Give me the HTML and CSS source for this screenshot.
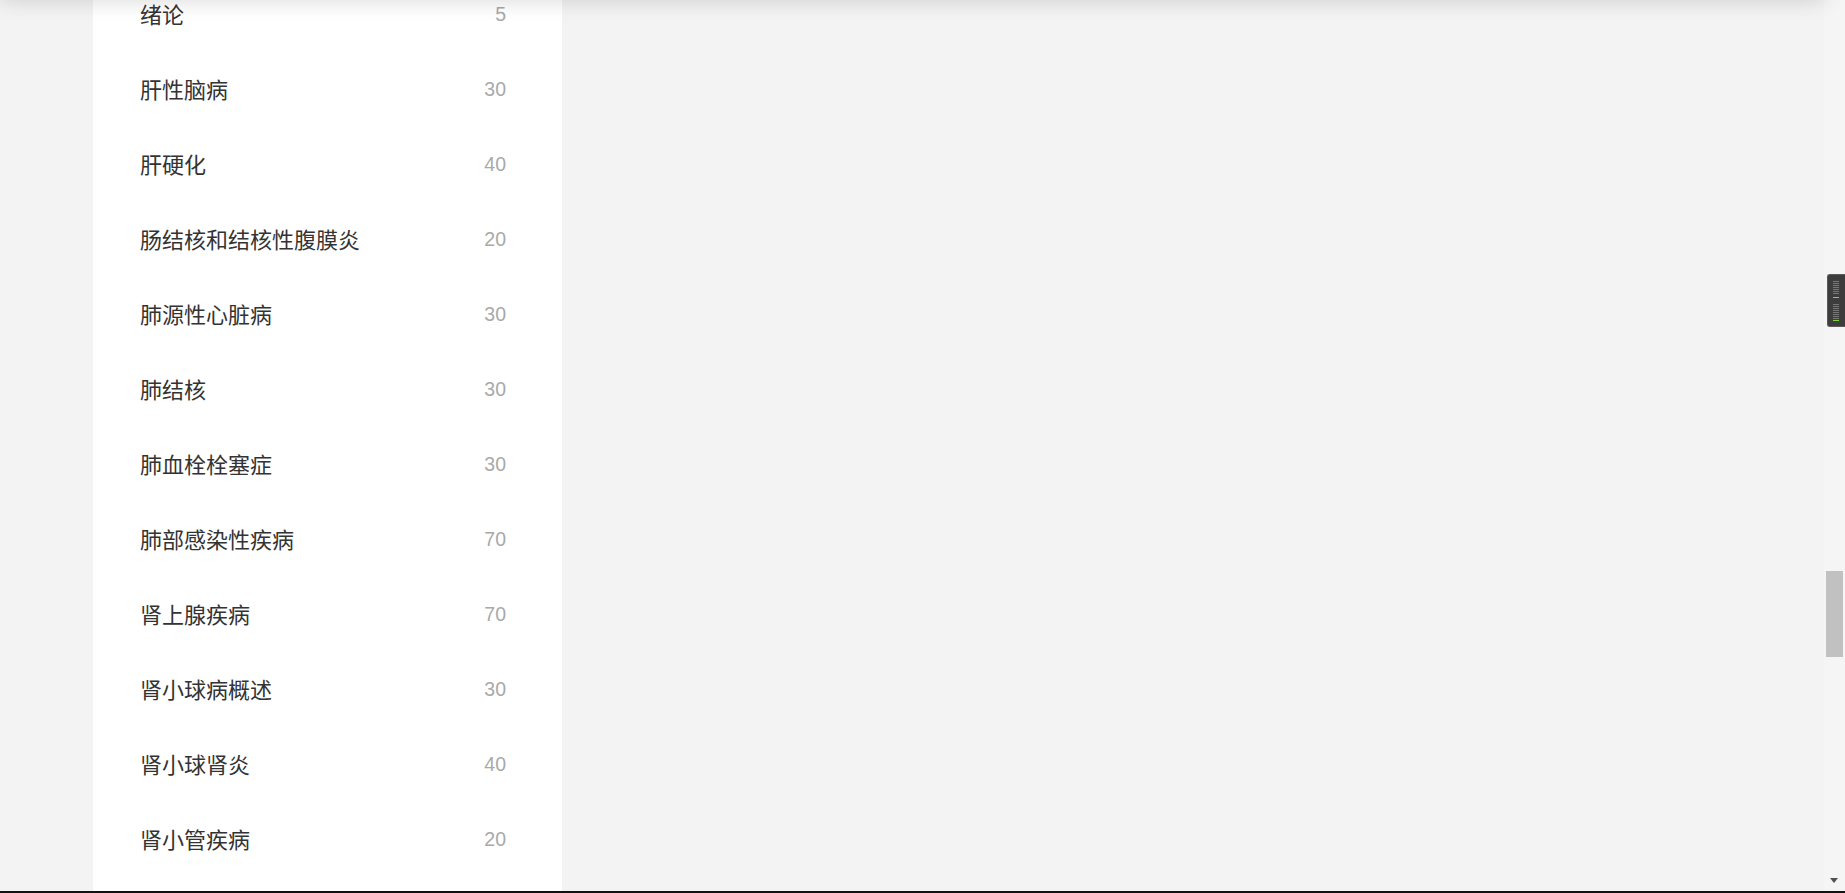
FILE: index.html
```html
<!DOCTYPE html>
<html lang="zh-CN">
<head>
<meta charset="utf-8">
<title>章节列表</title>
<link rel="stylesheet" href="styles.css">
</head>
<body>
<div class="top-shadow"></div>
<div class="viewport">
  <main class="page">
    <section class="panel">
      <ul class="chapter-list">
        <li class="chapter"><span class="name">绪论</span><span class="count">5</span></li>
        <li class="chapter"><span class="name">肝性脑病</span><span class="count">30</span></li>
        <li class="chapter"><span class="name">肝硬化</span><span class="count">40</span></li>
        <li class="chapter"><span class="name">肠结核和结核性腹膜炎</span><span class="count">20</span></li>
        <li class="chapter"><span class="name">肺源性心脏病</span><span class="count">30</span></li>
        <li class="chapter"><span class="name">肺结核</span><span class="count">30</span></li>
        <li class="chapter"><span class="name">肺血栓栓塞症</span><span class="count">30</span></li>
        <li class="chapter"><span class="name">肺部感染性疾病</span><span class="count">70</span></li>
        <li class="chapter"><span class="name">肾上腺疾病</span><span class="count">70</span></li>
        <li class="chapter"><span class="name">肾小球病概述</span><span class="count">30</span></li>
        <li class="chapter"><span class="name">肾小球肾炎</span><span class="count">40</span></li>
        <li class="chapter"><span class="name">肾小管疾病</span><span class="count">20</span></li>
      </ul>
    </section>
  </main>
  <div class="scrollbar">
    <div class="scroll-track">
      <div class="scroll-thumb"></div>
    </div>
    <div class="scroll-arrow"></div>
  </div>
</div>
<div class="bottom-bar"></div>
<div class="meter">
  <div class="meter-group">
    <span class="dash"></span><span class="dash"></span><span class="dash"></span><span class="dash"></span><span class="dash"></span><span class="dash"></span><span class="dash"></span>
    <span class="dash gap"></span>
    <span class="dash orange"></span>
  </div>
  <div class="meter-group second">
    <span class="dash"></span><span class="dash"></span><span class="dash"></span><span class="dash"></span><span class="dash"></span><span class="dash"></span><span class="dash"></span><span class="dash"></span>
    <span class="dash green"></span>
  </div>
</div>
</body>
</html>
```

FILE: styles.css
```css
* {
  box-sizing: border-box;
}

html, body {
  margin: 0;
  padding: 0;
  height: 100%;
  overflow: hidden;
}

body {
  display: flex;
  flex-direction: column;
  font-family: "Liberation Sans", "Noto Sans CJK SC", sans-serif;
  background: #f3f3f3;
}

.top-shadow {
  position: fixed;
  left: 0;
  top: -60px;
  width: 1824px;
  height: 60px;
  background: #f3f3f3;
  box-shadow: 0 0 22px rgba(0, 0, 0, 0.16);
  z-index: 5;
}

.viewport {
  display: flex;
  height: 891px;
  flex: none;
}

.page {
  flex: 1;
  background: #f3f3f3;
  padding-left: 93px;
  overflow: hidden;
}

.panel {
  width: 469px;
  height: 100%;
  background: #ffffff;
  overflow: hidden;
}

.chapter-list {
  list-style: none;
  margin: -23px 0 0 0;
  padding: 0 56px 0 47px;
}

.chapter {
  height: 75px;
  display: flex;
  align-items: center;
  justify-content: space-between;
}

.name {
  font-family: "Noto Sans CJK SC", "Liberation Sans", sans-serif;
  font-size: 22px;
  color: #333333;
  line-height: 1;
  margin-bottom: 4px;
}

.count {
  font-family: "Liberation Sans", sans-serif;
  font-size: 19.5px;
  color: #a9a9a9;
  line-height: 1;
}

.scrollbar {
  width: 21px;
  flex: none;
  background: #f5f5f5;
  display: flex;
  flex-direction: column;
  padding: 0 2px 0 2px;
}

.scroll-track {
  flex: 1;
  padding-top: 571px;
}

.scroll-thumb {
  width: 17px;
  height: 86px;
  background: #c1c1c1;
}

.scroll-arrow {
  width: 0;
  height: 0;
  margin: 0 0 8px 4px;
  border-left: 4.5px solid transparent;
  border-right: 4.5px solid transparent;
  border-top: 5px solid #505050;
}

.bottom-bar {
  height: 2px;
  flex: none;
  background: #111111;
}

.meter {
  position: fixed;
  right: 0;
  top: 274px;
  width: 18px;
  height: 53px;
  background: #3d3d3d;
  border: 1px solid #5a5a5a;
  border-right: none;
  border-radius: 3px 0 0 3px;
  padding: 6px 0 0 5px;
  display: flex;
  flex-direction: column;
  z-index: 6;
}

.meter-group {
  display: flex;
  flex-direction: column;
  gap: 1px;
}

.meter-group.second {
  margin-top: 6px;
}

.dash {
  display: block;
  width: 6px;
  height: 1px;
  background: #777777;
}

.dash.gap {
  background: transparent;
  height: 1px;
}

.dash.orange {
  background: #f0a030;
}

.dash.green {
  background: #7ddc1f;
}
```
